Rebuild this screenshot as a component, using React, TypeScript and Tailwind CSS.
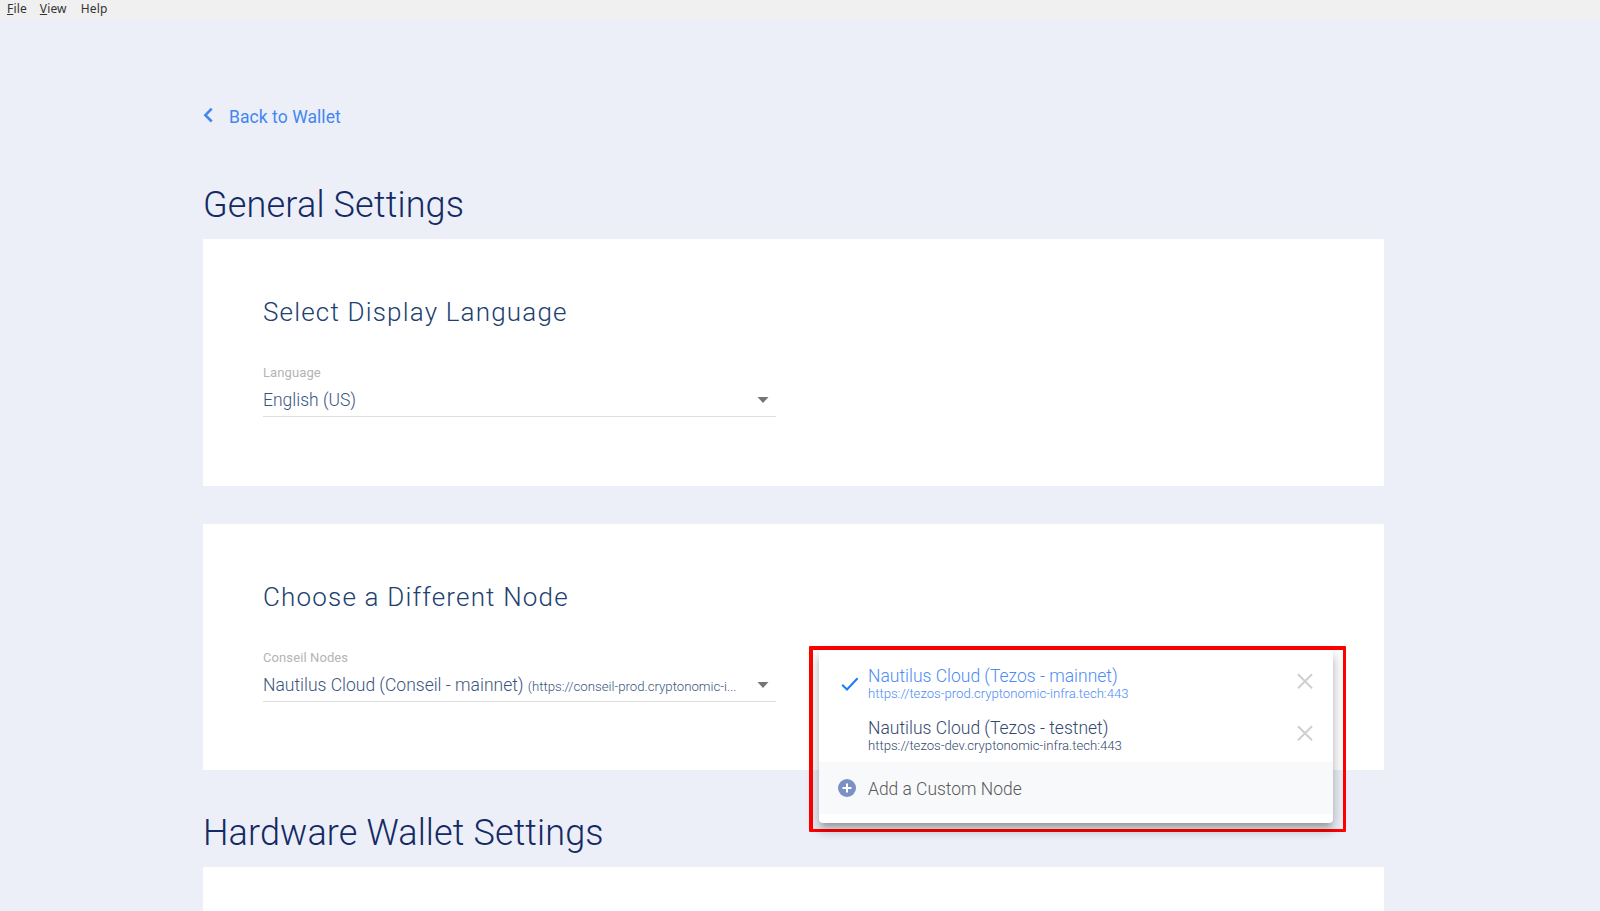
import type { ReactNode } from 'react';

function BackLink() {
  return (
    <a href="#" className="flex h-6 w-fit items-center text-[#4486f0]">
      <svg width="11" height="16" viewBox="0 0 11 16" fill="none" className="-mt-0.5">
        <path d="M8.7 1.7 2.4 8.2l6.3 6.3" stroke="currentColor" strokeWidth="2.6" />
      </svg>
      <span className="mt-0.5 ml-[15px] text-[17.5px] tracking-[0.06px]">Back to Wallet</span>
    </a>
  );
}

function Card({ title, children }: { title: string; children: ReactNode }) {
  return (
    <section className="h-full bg-white px-[60px] pt-[53px]">
      <h2 className="text-[26px] leading-10 font-light tracking-[1.18px] whitespace-nowrap text-[#21406f]">{title}</h2>
      {children}
    </section>
  );
}

function SelectField({ label, children }: { label: string; children: ReactNode }) {
  return (
    <div className="mt-[33px] w-[513px]">
      <div className="text-[13px] leading-4 tracking-[0.1px] text-[#b4b4b4]">{label}</div>
      <div className="mt-[7px] flex h-[29px] items-start justify-between border-b border-[#dedede] pr-[7px]">
        <div className="text-[17.5px] leading-6 font-light whitespace-nowrap text-[#3a5480]">{children}</div>
        <svg width="12" height="6" viewBox="0 0 12 6" className="mt-[9px]">
          <path d="M0.5 0h11L6 6z" fill="#757575" />
        </svg>
      </div>
    </div>
  );
}

function NodeOption({ name, url, selected }: { name: string; url: string; selected?: boolean }) {
  return (
    <li className={selected ? 'flex h-[52px] text-[#4c8cf5]' : 'flex h-[52px] text-[#34496f]'}>
      <div className="w-[49px] shrink-0 pt-[18px] pl-[22px]">
        {selected && (
          <svg width="18" height="16" viewBox="0 0 18 16" fill="none">
            <path d="M1.2 8.7 6 13.5 16.6 2.3" stroke="#1c7cf5" strokeWidth="2" />
          </svg>
        )}
      </div>
      <div className="flex-1 pt-2 font-light whitespace-nowrap">
        <div className="text-[17.5px] leading-5">{name}</div>
        <div className="text-[13.15px] leading-[15px]">{url}</div>
      </div>
      <svg width="16" height="16" viewBox="0 0 16 16" fill="none" className="mt-[15px] mr-5">
        <path d="m1 1.3 14 14M15 1.3 1 15.3" stroke="#cfcfcf" strokeWidth="2" />
      </svg>
    </li>
  );
}

function NodeMenu() {
  return (
    <div className="absolute top-[646px] left-[809px] h-[186px] w-[537px] rounded-[1px] border-[3px] border-t-4 border-l-4 border-[#ff0000] pl-[6px]">
      <div className="h-[173px] w-[514px] rounded bg-white pt-2 shadow-[0_5px_5px_-3px_rgba(0,0,0,0.2),0_8px_10px_1px_rgba(0,0,0,0.14),0_3px_14px_2px_rgba(0,0,0,0.12)]">
        <ul>
          <NodeOption selected name="Nautilus Cloud (Tezos - mainnet)" url="https://tezos-prod.cryptonomic-infra.tech:443" />
          <NodeOption name="Nautilus Cloud (Tezos - testnet)" url="https://tezos-dev.cryptonomic-infra.tech:443" />
        </ul>
        <div className="flex h-[52px] items-center bg-[#f7f9fb] pl-[19px]">
          <svg width="18" height="18" viewBox="0 0 18 18" fill="none">
            <circle cx="9" cy="9" r="9" fill="#7b91c4" />
            <path d="M9 4.5v9M4.5 9h9" stroke="#fff" strokeWidth="2" />
          </svg>
          <span className="mt-[3px] ml-3 text-[17.45px] font-light text-[#5a5a5a]">Add a Custom Node</span>
        </div>
      </div>
    </div>
  );
}

export default function App() {
  return (
    <div className="relative h-[911px] w-[1600px] overflow-hidden bg-[#eceff7] font-[Roboto,sans-serif]">
      <nav className="flex h-[19px] gap-[13px] bg-[#f0f0f0] pl-[7px] font-['Noto_Sans',sans-serif] text-[12px] leading-[17px] tracking-[0.15px] text-[#333]">
        <span><u>F</u>ile</span>
        <span><u>V</u>iew</span>
        <span className="pl-px">Help</span>
      </nav>
      <main className="ml-[203px] w-[1181px] pt-[85px]">
        <BackLink />
        <h1 className="mt-[53px] mb-[10px] text-[36px] leading-[48px] font-light tracking-[0.17px] text-[#142a63]">General Settings</h1>
        <div className="h-[247px]">
          <Card title="Select Display Language">
            <SelectField label="Language">English (US)</SelectField>
          </Card>
        </div>
        <div className="mt-[38px] h-[246px]">
          <Card title="Choose a Different Node">
            <SelectField label="Conseil Nodes">
              Nautilus Cloud (Conseil - mainnet) <span className="text-[13.2px]">(https://conseil-prod.cryptonomic-i...</span>
            </SelectField>
          </Card>
        </div>
        <h1 className="mt-[39px] mb-[10px] text-[36px] leading-[48px] font-light tracking-[0.13px] text-[#142a63]">Hardware Wallet Settings</h1>
        <section className="h-16 bg-white" />
      </main>
      <NodeMenu />
    </div>
  );
}
